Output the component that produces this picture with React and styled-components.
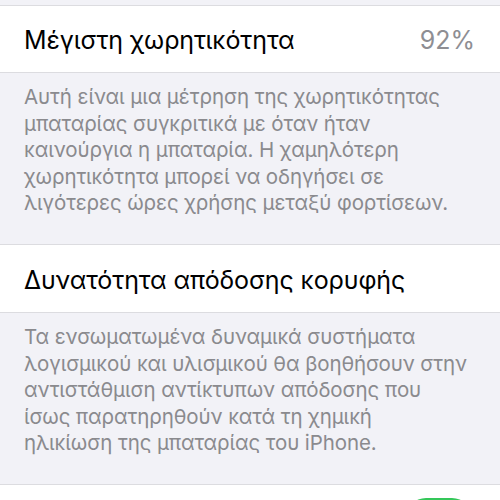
import styled, { createGlobalStyle } from "styled-components";

const GlobalStyle = createGlobalStyle`
  html, body {
    margin: 0;
    padding: 0;
    background: #f2f2f7;
    overflow: hidden;
  }
  body {
    font-family: Inter, "Noto Sans", sans-serif;
    -webkit-font-smoothing: antialiased;
  }
`;

const Page = styled.div`
  width: 500px;
  height: 500px;
  overflow: hidden;
  background: #f2f2f7;
`;

const TopGap = styled.div`
  height: 5px;
`;

const Cell = styled.div`
  display: flex;
  align-items: center;
  justify-content: space-between;
  height: ${(p) => p.h || 68}px;
  padding: 2px 25px 0 24px;
  box-sizing: border-box;
  background: #ffffff;
  border-top: 1px solid #dcdce0;
  border-bottom: 1px solid #dcdce0;
`;

const Title = styled.span`
  font-size: 25px;
  color: #000;
  letter-spacing: -0.1px;
`;

const Value = styled.span`
  font-size: 25px;
  color: #8e8e93;
`;

const Footer = styled.div`
  height: 171px;
  box-sizing: border-box;
  padding: 11px 20px 0 24px;
  font-size: 20.5px;
  line-height: 26.5px;
  color: #8a8a8e;
  letter-spacing: -0.1px;
`;

const Line = styled.div`
  white-space: nowrap;
`;

const LastCell = styled.div`
  display: flex;
  justify-content: flex-end;
  height: 40px;
  padding: 13px 28px 0 0;
  background: #ffffff;
  border-top: 1px solid #dcdce0;
`;

const Toggle = styled.div`
  width: 66px;
  height: 40px;
  border-radius: 20px;
  background: #34c759;
`;

const capacityText = [
  "Αυτή είναι μια μέτρηση της χωρητικότητας",
  "μπαταρίας συγκριτικά με όταν ήταν",
  "καινούργια η μπαταρία. Η χαμηλότερη",
  "χωρητικότητα μπορεί να οδηγήσει σε",
  "λιγότερες ώρες χρήσης μεταξύ φορτίσεων.",
];

const peakText = [
  "Τα ενσωματωμένα δυναμικά συστήματα",
  "λογισμικού και υλισμικού θα βοηθήσουν στην",
  "αντιστάθμιση αντίκτυπων απόδοσης που",
  "ίσως παρατηρηθούν κατά τη χημική",
  "ηλικίωση της μπαταρίας του iPhone.",
];

const App = () => {
  return (
    <Page>
      <GlobalStyle />
      <TopGap />
      <Cell>
        <Title>Μέγιστη χωρητικότητα</Title>
        <Value>92%</Value>
      </Cell>
      <Footer>
        {capacityText.map((t) => (
          <Line key={t}>{t}</Line>
        ))}
      </Footer>
      <Cell h={69}>
        <Title>Δυνατότητα απόδοσης κορυφής</Title>
      </Cell>
      <Footer>
        {peakText.map((t) => (
          <Line key={t}>{t}</Line>
        ))}
      </Footer>
      <LastCell>
        <Toggle />
      </LastCell>
    </Page>
  );
};

export default App;
